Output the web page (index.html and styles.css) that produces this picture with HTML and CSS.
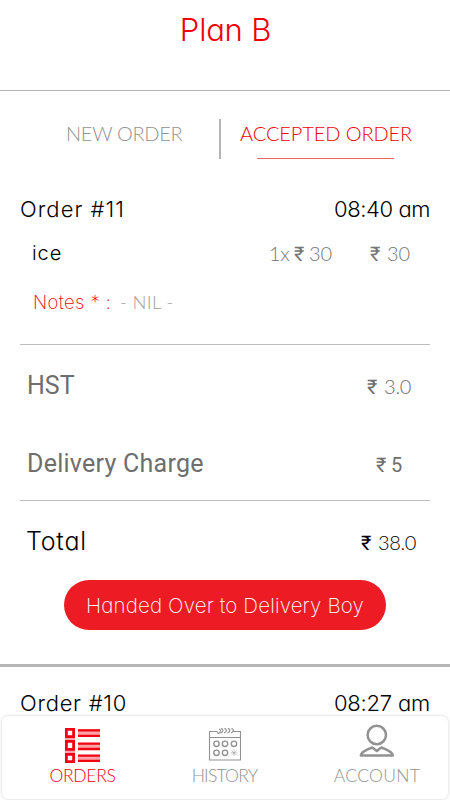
FILE: index.html
```
<!DOCTYPE html>
<html lang="en">
<head>
<meta charset="utf-8">
<title>Plan B</title>
<link rel="stylesheet" href="styles.css">
</head>
<body>
<div class="screen">
  <main class="content">
    <header class="header"><h1>Plan B</h1></header>
    <div class="tabs">
      <div class="tab tab-new">NEW ORDER</div>
      <div class="tab tab-accepted">ACCEPTED ORDER</div>
    </div>
    <section class="order">
      <div class="order-head"><span class="order-id id-11">Order #11</span><span class="time">08:40 am</span></div>
      <div class="item">
        <span class="item-name">ice</span>
        <span class="qty"><span class="times">1x</span><span class="rupee">₹</span>30</span>
        <span class="price"><span class="rupee">₹</span>30</span>
      </div>
      <div class="notes"><span class="notes-label">Notes * :</span><span class="notes-value">- NIL -</span></div>
      <div class="charges">
        <div class="charge"><span>HST</span><span class="amount tax"><span class="rupee">₹</span>3.0</span></div>
        <div class="charge"><span class="fee-label">Delivery Charge</span><span class="amount fee"><span class="rupee">₹</span>5</span></div>
      </div>
      <div class="total"><span class="total-label">Total</span><span class="amount sum"><span class="rupee">₹</span>38.0</span></div>
      <button class="handover">Handed Over to Delivery Boy</button>
    </section>
    <section class="order order-next">
      <div class="order-head"><span class="order-id">Order #10</span><span class="time time-next">08:27 am</span></div>
    </section>
  </main>
  <nav class="nav">
    <div class="nav-item active">
      <svg class="icon" width="36" height="36" viewBox="0 0 36 36" fill="none" stroke="currentColor">
        <g class="haze" stroke="none"><path d="M0 0h10v35H0zM13 1h22v8H13zM13 15h22v7H13zM13 27h22v7H13z"/></g>
        <path class="box" stroke-width="2.8" d="M1.4 1.4h7.200v7.200h-7.200zM1.400 13.400h7.200v8h-7.200zM1.400 26.400h7.200v7.200h-7.200z"/>
        <path stroke-width="2.3" d="M13 2.4h22M13 7.8h22M13 15.6h22M13 21h22M13 27.6h22M13 32.8h22"/>
      </svg>
      <span class="label-orders">ORDERS</span>
    </div>
    <div class="nav-item">
      <svg class="icon" width="34" height="36" viewBox="0 0 34 36" fill="none" stroke="currentColor" stroke-width="1.1">
        <path d="M9.5 3.5H1.5v28.500h31V3.500H24.500M1.500 9.500h31"/>
        <path d="M9 4.500q2 2 3-.5t-1-3M12.500 5q2.700-1 2.300-2.800t-2-1.500M16 5q2.700-1 2.300-2.800t-2-1.500M19.500 5q2.700-1 2.300-2.800t-2-1.500M23 5q2.700-1 2.300-2.800t-2-1.500"/>
        <g stroke-width="1.400"><circle cx="8.500" cy="15.800" r="2.700"/><circle cx="17" cy="15.800" r="2.700"/><circle cx="26" cy="15.800" r="2.700"/><circle cx="8.500" cy="24.800" r="2.700"/><circle cx="17" cy="24.800" r="2.700"/></g>
        <path stroke-width=".5" d="M26 21.500v6.600M22.700 24.800h6.600M23.600 22.400l4.800 4.800M28.400 22.400l-4.800 4.800"/>
      </svg>
      <span class="label-history">HISTORY</span>
    </div>
    <div class="nav-item account">
      <svg class="icon" width="36" height="36" viewBox="0 0 36 36" fill="none" stroke="currentColor" stroke-width="2.500" stroke-linejoin="round">
        <circle cx="17.800" cy="7" r="9.200"/>
        <path d="M1.800 27.500h32c-.5-3.500-4.500-5.500-11.500-8l-4.500 3.500-4.500-3.500c-7 2.500-11 4.500-11.500 8z"/>
      </svg>
      <span class="label-account">ACCOUNT</span>
    </div>
  </nav>
</div>
</body>
</html>
```
FILE: styles.css
```
* { box-sizing: border-box; }
body { margin: 0; background: #fff; color: #000; font-family: Inter, "Liberation Sans", sans-serif; font-weight: 300; font-feature-settings: "cv11"; }
.screen { display: flex; flex-direction: column; width: 450px; height: 800px; overflow: hidden; }
.content { height: 716px; overflow: hidden; }
.header { height: 91px; border-bottom: 1px solid #b5b5b5; }
h1 { margin: 0; padding: 1px 0 0 1px; text-align: center; font-size: 31px; font-weight: 300; line-height: 57px; letter-spacing: -.2px; color: #f00008; }
.tabs { display: flex; height: 40px; margin-top: 28px; font-family: Lato, sans-serif; font-size: 20px; line-height: 28px; }
.tab-new { width: 221px; padding-left: 66px; border-right: 2px solid #b4b4b4; color: #929292; letter-spacing: -.28px; }
.tab-accepted { display: flex; flex-direction: column; width: 172px; margin-left: 19px; color: #f00008; letter-spacing: -.1px; white-space: nowrap; }
.tab-accepted::after { content: ""; width: 137px; height: 1px; margin: 11px 0 0 17px; background: #f0646a; }
.order { padding: 32px 20px 34px; border-bottom: 3px solid #b5b5b5; }
.order-head { display: flex; justify-content: space-between; height: 34px; font-size: 22px; line-height: 36px; letter-spacing: .72px; }
.id-11 { letter-spacing: 1.05px; }
.time { letter-spacing: -.42px; }
.time-next { letter-spacing: -.2px; }
.item { display: flex; margin-top: 11px; padding-left: 12px; font-family: Lato, sans-serif; font-size: 20px; line-height: 34px; color: #777; }
.item-name { width: 237px; color: #000; font-family: Inter, sans-serif; line-height: 35px; height: 34px; letter-spacing: .9px; }
.qty { width: 101px; }
.times { display: inline-block; width: 25px; letter-spacing: -.3px; }
.rupee { display: inline-block; width: 17px; font-family: Roboto, sans-serif; font-weight: 400; line-height: 1; letter-spacing: 0; }
.qty .rupee { width: 15px; }
.notes { display: flex; margin-top: 16px; padding-left: 13px; font-size: 18.5px; line-height: 32px; }
.notes-label { width: 87px; color: #f00008; font-weight: 200; letter-spacing: .4px; }
.notes-value { color: #a0a0a0; font-family: Lato, sans-serif; letter-spacing: .33px; }
.charges { display: flex; flex-direction: column; gap: 38px; margin-top: 26px; padding: 21px 0 16px 7px; border: solid #bdbdbd; border-width: 1px 0; color: #6e6e6e; }
.charge { display: flex; align-items: baseline; justify-content: space-between; height: 40px; font-family: Roboto, sans-serif; font-size: 25px; font-weight: 400; line-height: 40px; }
.fee-label { letter-spacing: .25px; }
.amount { font-size: 20px; }
.tax { width: 63px; font-family: Lato, sans-serif; font-weight: 300; letter-spacing: -.2px; }
.fee { width: 54px; }
.fee .rupee { width: 15px; }
.total { display: flex; align-items: baseline; justify-content: space-between; height: 40px; margin-top: 19px; padding-left: 6px; font-size: 25px; line-height: 43px; }
.total-label { letter-spacing: .8px; }
.sum { width: 69px; font-family: Lato, sans-serif; letter-spacing: -.4px; }
.handover { display: block; width: 322px; height: 50px; margin: 20px auto 0; padding: 1px 0 0; border: 0; border-radius: 25px; background: #ed1c24; color: #fff; font: 200 20.5px/50px Inter, sans-serif; font-feature-settings: inherit; letter-spacing: .15px; white-space: nowrap; }
.order-next { padding-top: 18px; border: 0; }
.nav { display: grid; grid-template-columns: 161px 123px 162px; flex: none; height: 83px; margin: 0 2px; border-radius: 6px; background: #fff; box-shadow: 0 0 3px rgba(0,0,0,.2); color: #929292; font-family: Lato, sans-serif; font-size: 17.5px; line-height: 24px; }
.nav-item { display: flex; flex-direction: column; align-items: center; padding-top: 12px; white-space: nowrap; }
.active { color: #f00512; }
.account { padding-left: 20px; }
.icon { flex: none; overflow: visible; }
.haze { fill: #ffa5aa; }
.box { fill: #fff; }
.label-orders { letter-spacing: -.3px; }
.label-history { letter-spacing: -.78px; }
.label-account { letter-spacing: .3px; }
```
